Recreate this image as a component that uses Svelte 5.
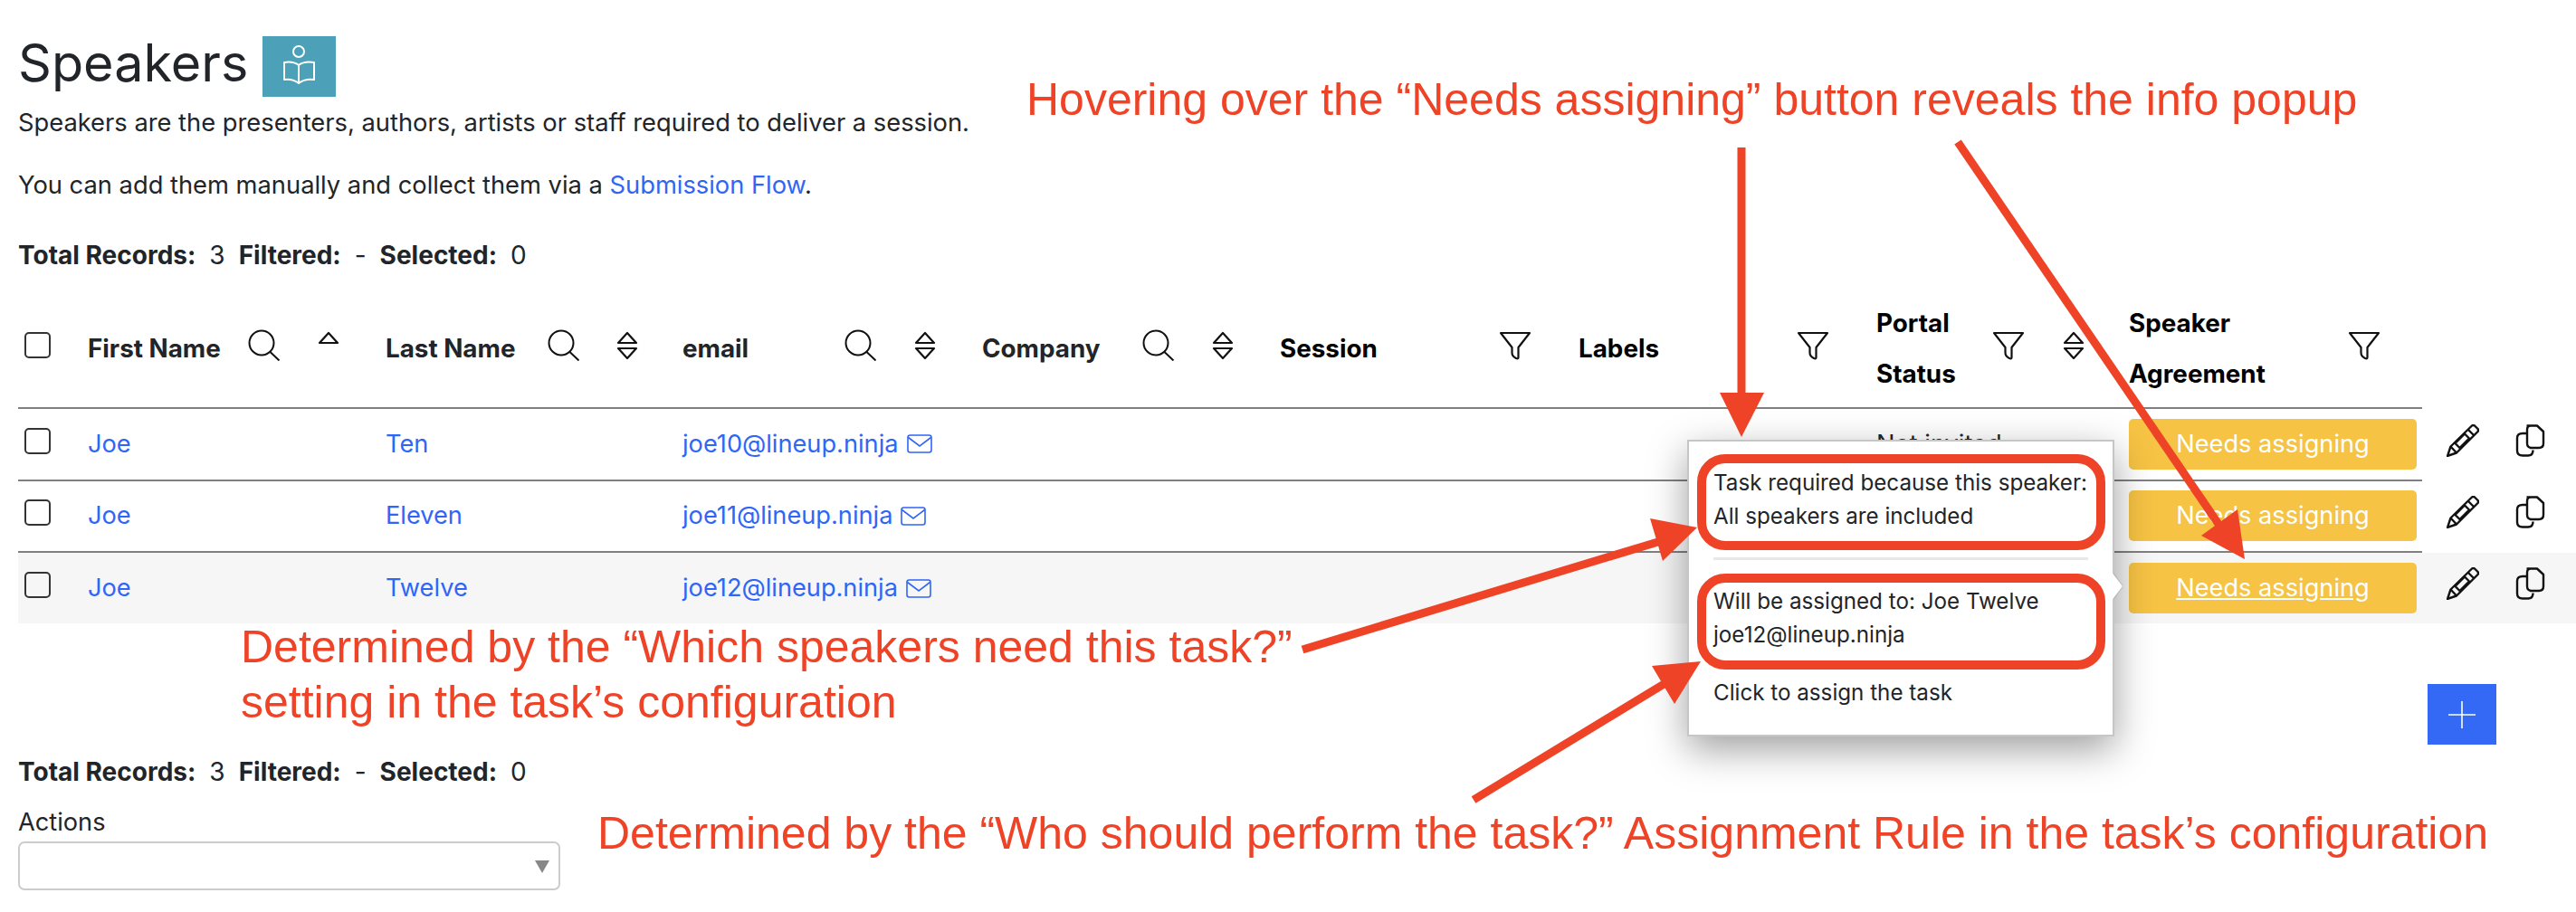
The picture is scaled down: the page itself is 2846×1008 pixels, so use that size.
<script lang="ts">
  const columns = [
    { label: "First Name", tpl: "177px 77px auto", search: true, sort: "up" },
    { label: "Last Name", tpl: "179px 76px auto", search: true, sort: "both" },
    { label: "email", tpl: "179px 77px auto", search: true, sort: "both" },
    { label: "Company", tpl: "177px 77px auto", search: true, sort: "both" },
    { label: "Session", tpl: "242px auto", filter: true, strong: true },
    { label: "Labels", tpl: "241px auto", filter: true, strong: true },
    { label: "Portal Status", tpl: "128px 78px auto", filter: true, sort: "both", strong: true, wrap: true },
    { label: "Speaker Agreement", tpl: "242px auto", filter: true, strong: true, wrap: true },
  ];

  const speakers = [
    { first: "Joe", last: "Ten", email: "joe10@lineup.ninja" },
    { first: "Joe", last: "Eleven", email: "joe11@lineup.ninja" },
    { first: "Joe", last: "Twelve", email: "joe12@lineup.ninja", hover: true },
  ];
</script>

{#snippet totals()}
  <div class="totals">
    <b>Total Records:</b><span>3</span><b>Filtered:</b><span>-</span><b>Selected:</b><span>0</span>
  </div>
{/snippet}

<div class="page">
  <header class="title-row">
    <h1>Speakers</h1>
    <div class="badge">
      <svg width="37" height="50" viewBox="0 0 37 50" fill="none" stroke="#fff" stroke-width="2">
        <circle cx="18" cy="8" r="6" />
        <path d="M18 23 C14 20 8 19 2 20 V39 C8 38 13 39 18 43 C23 39 28 38 35 39 V20 C28 19 22 20 18 23 Z M18 23 V43" stroke-linejoin="round" />
      </svg>
    </div>
  </header>
  <p class="intro">Speakers are the presenters, authors, artists or staff required to deliver a session.</p>
  <p class="intro second">You can add them manually and collect them via a <a href="#flow">Submission Flow</a>.</p>
  {@render totals()}

  <div class="table">
    <div class="row head">
      <div class="cells">
        <div class="cell"><span class="check"></span></div>
        {#each columns as col}
          <div class="cell th" class:strong={col.strong} style="grid-template-columns:{col.tpl}">
            <span class="th-label" class:wrap={col.wrap}>{col.label}</span>
            {#if col.search}
              <svg class="ico" width="36" height="35" viewBox="0 0 36 35" fill="none" stroke="#111" stroke-width="2">
                <circle cx="15" cy="15" r="13.5" /><path d="M24.5 25 L34.5 34.5" />
              </svg>
            {/if}
            {#if col.filter}
              <svg class="ico" width="36" height="32" viewBox="0 0 36 32" fill="none" stroke="#111" stroke-width="2.2" stroke-linejoin="round">
                <path d="M2 2 H34 L21.5 18 V29 Q21.5 31 19 30 C16 28.5 14.5 27 14.5 24 V18 Z" />
              </svg>
            {/if}
            {#if col.sort}
              <svg class="ico" width="24" height="32" viewBox="0 0 24 32" fill="none" stroke="#111" stroke-width="2.2" stroke-linejoin="round">
                <path d="M12 2 L22 13 H2 Z" />
                {#if col.sort === "both"}<path d="M12 30 L22 19 H2 Z" />{/if}
              </svg>
            {/if}
          </div>
        {/each}
      </div>
    </div>

    {#each speakers as s}
      <div class="row" class:hover={s.hover}>
        <div class="cells">
          <div class="cell"><span class="check"></span></div>
          <div class="cell"><a href="#first">{s.first}</a></div>
          <div class="cell"><a href="#last">{s.last}</a></div>
          <div class="cell email">
            <a href="#mail">{s.email}</a>
            <svg width="28" height="21" viewBox="0 0 28 21" fill="none" stroke="#2f66f6" stroke-width="1.6">
              <rect x="1" y="1" width="26" height="19" rx="2.5" /><path d="M1.5 3.5 L14 13 L26.5 3.5" />
            </svg>
          </div>
          <div class="cell"></div>
          <div class="cell"></div>
          <div class="cell"></div>
          <div class="cell">Not invited</div>
          <div class="cell"><a class="assign" class:over={s.hover} href="#assign">Needs assigning</a></div>
        </div>
        <div class="actions">
          <svg width="36" height="36" viewBox="0 0 36 36" fill="none" stroke="#111" stroke-width="2.4" stroke-linejoin="round">
            <path d="M1 35 L4.5 24.5 L28 1.5 Q29.5 .5 31 1.5 L34.5 5 Q35.5 6.5 34.5 8 L11 31.5 Z" />
            <path d="M24 6 L30.500 12.500 M9.500 21 L20 10.500 L25 15.500 L14.500 26 Z M4.500 24.500 L11 31.500" />
          </svg>
          <svg width="33" height="36" viewBox="0 0 33 36" fill="none" stroke="#111" stroke-width="2.4" stroke-linejoin="round">
            <path d="M12.500 1.500 H24 L31 8 V21 Q31 26 26 26 H18 Q13 26 13 21 V6 Q13 1.500 17 1.500" />
            <path d="M13 10 H8 Q2 10 2 15 V29 Q2 34.500 8 34.500 H14 Q19.500 34.500 19.500 28.500" />
          </svg>
        </div>
      </div>
    {/each}
  </div>

  <div class="fab-row">
    <div class="fab">
      <svg width="30" height="30" viewBox="0 0 30 30" stroke="#fff" stroke-width="1.6"><path d="M15 0 V30 M0 15 H30" /></svg>
    </div>
  </div>

  {@render totals()}
  <label class="actions-label" for="bulk">Actions</label>
  <div class="select" id="bulk"><span class="caret"></span></div>

  <aside class="popover">
    <p>Task required because this speaker:<br />All speakers are included</p>
    <hr />
    <p>Will be assigned to: Joe Twelve<br />joe12@lineup.ninja</p>
    <p class="click">Click to assign the task</p>
    <span class="nub"></span>
  </aside>

  <svg class="marks" width="2846" height="1008" viewBox="0 0 2846 1008">
    <g fill="none" stroke="#ee4327" stroke-width="10">
      <rect x="1880" y="507" width="441" height="96" rx="26" />
      <rect x="1880" y="639" width="441" height="96" rx="26" />
    </g>
    <g fill="none" stroke="#ee4327" stroke-width="9">
      <path d="M1924 163 V440" />
      <path d="M2163 157 L2455 585" />
      <path d="M1439 718 L1835 598" />
      <path d="M1628 884 L1840 755" />
    </g>
    <g fill="#ee4327">
      <path d="M1900 434 H1949 L1924 483 Z" />
      <path d="M2480 618 L2472 563 L2432 592 Z" />
      <path d="M1875 583 L1823 573 L1837 620 Z" />
      <path d="M1879 731 L1825 736 L1850 778 Z" />
    </g>
  </svg>

  <div class="note top">Hovering over the “Needs assigning” button reveals the info popup</div>
  <div class="note left">Determined by the “Which speakers need this task?”<br />setting in the task’s configuration</div>
  <div class="note bottom">Determined by the “Who should perform the task?” Assignment Rule in the task’s configuration</div>
</div>

<style>
  :global(body) {
    margin: 0;
    background: #fff;
  }

  .page {
    position: relative;
    width: 2846px;
    height: 1008px;
    overflow: hidden;
    padding: 40px 0 0 20px;
    box-sizing: border-box;
    font-family: Inter, "Liberation Sans", sans-serif;
    font-size: 27.2px;
    line-height: 40px;
    color: #212529;
  }

  a {
    color: #2f66f6;
    text-decoration: none;
  }

  .title-row {
    display: flex;
    align-items: flex-start;
    gap: 16px;
    height: 67px;
  }

  h1 {
    margin: 0;
    font-size: 57.5px;
    font-weight: 400;
    line-height: 58px;
  }

  .badge {
    width: 81px;
    height: 67px;
    background: #4ca1b8;
    display: flex;
    align-items: center;
    justify-content: center;
  }

  .intro {
    margin: 9px 0 0;
    font-size: 27.3px;
  }

  .intro.second {
    margin-top: 29px;
  }

  .totals {
    display: flex;
    margin-top: 37px;
    font-size: 28px;
  }

  .totals b {
    font-weight: 700;
    margin-right: 15px;
  }

  .totals span {
    margin-right: 15px;
  }

  .table {
    margin-top: 24px;
  }

  .row {
    display: flex;
    height: 79.5px;
  }

  .row.head {
    height: 126px;
  }

  .row.hover {
    height: 78px;
    background: #f6f6f6;
  }

  .cells {
    width: 2656px;
    display: grid;
    grid-template-columns: 77px 329px 328px 331px 329px 330px 329px 279px 324px;
    align-items: center;
    border-bottom: 2px solid #808080;
    box-sizing: border-box;
  }

  .row.hover .cells {
    border-bottom: 0;
  }

  .cell {
    min-width: 0;
  }

  .head .cells {
    padding-bottom: 7px;
  }

  .th {
    display: grid;
    align-items: center;
    font-size: 27.8px;
    font-weight: 700;
    line-height: 56px;
  }

  .th.strong {
    color: #000;
  }

  .th-label {
    white-space: nowrap;
  }

  .th-label.wrap {
    white-space: normal;
    width: 120px;
  }

  .ico {
    display: block;
    margin-top: -6px;
  }

  .check {
    display: block;
    width: 29px;
    height: 29px;
    margin-left: 7px;
    margin-top: -7px;
    border: 2px solid #333;
    border-radius: 5px;
    box-sizing: border-box;
  }

  .email {
    display: flex;
    align-items: center;
    gap: 9px;
  }

  .assign {
    display: block;
    height: 56px;
    line-height: 56px;
    width: 318px;
    text-align: center;
    background: #f6c344;
    color: #fff;
    border-radius: 5px;
  }

  .assign.over {
    text-decoration: underline;
  }

  .actions {
    display: flex;
    align-items: center;
    gap: 40px;
    padding-left: 27px;
    padding-bottom: 10px;
  }

  .fab-row {
    display: flex;
    justify-content: flex-end;
    padding-right: 88px;
    margin-top: 67px;
  }

  .fab {
    width: 76px;
    height: 67px;
    background: #3469f5;
    display: flex;
    align-items: center;
    justify-content: center;
  }

  .fab-row + .totals {
    margin-top: 10px;
  }

  .actions-label {
    display: block;
    margin-top: 16px;
  }

  .select {
    position: relative;
    width: 599px;
    height: 54px;
    margin-top: 1px;
    border: 2px solid #ccc;
    border-radius: 7px;
    box-sizing: border-box;
  }

  .caret {
    position: absolute;
    right: 10px;
    top: 19px;
    border-left: 8px solid transparent;
    border-right: 8px solid transparent;
    border-top: 14px solid #888;
  }

  .popover {
    position: absolute;
    left: 1864px;
    top: 486px;
    width: 472px;
    height: 328px;
    box-sizing: border-box;
    background: #fff;
    border: 2px solid #c6c6c6;
    box-shadow: 0 14px 40px rgba(0, 0, 0, 0.38);
    padding: 27px 27px 0;
    font-size: 24.2px;
    line-height: 37px;
  }

  .popover p {
    margin: 0;
    white-space: nowrap;
  }

  .popover hr {
    margin: 27px 0 27px;
    border: 0;
    border-top: 3px solid #e8e8e8;
  }

  .popover .click {
    margin-top: 27px;
  }

  .nub {
    position: absolute;
    right: -9px;
    top: 151px;
    width: 18px;
    height: 18px;
    background: #fff;
    transform: rotate(45deg) skew(8deg, 8deg);
    box-shadow: 1px -1px 1px rgba(0, 0, 0, 0.12);
  }

  .marks {
    position: absolute;
    left: 0;
    top: 0;
    pointer-events: none;
  }

  .note {
    position: absolute;
    font-family: "Liberation Sans", Arial, sans-serif;
    font-size: 50px;
    line-height: 56px;
    color: #ee4327;
    white-space: nowrap;
  }

  .note.top {
    left: 1134px;
    top: 82px;
  }

  .note.left {
    left: 266px;
    top: 685px;
    line-height: 61px;
  }

  .note.bottom {
    left: 660px;
    top: 893px;
  }
</style>
